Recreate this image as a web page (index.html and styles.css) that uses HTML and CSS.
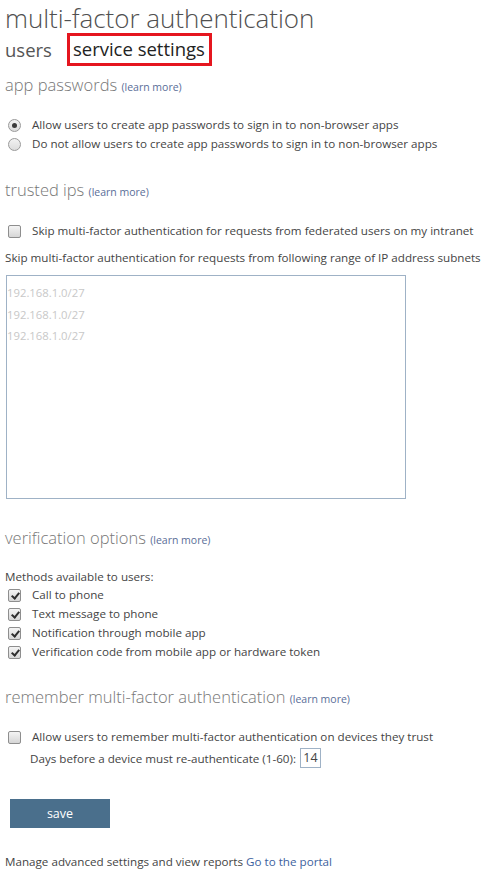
FILE: index.html
```html
<!DOCTYPE html>
<html>
<head>
<meta charset="utf-8">
<link rel="stylesheet" href="styles.css">
</head>
<body>
<div class="page">
  <h1 class="title">multi-factor authentication</h1>
  <div class="tabs">
    <span class="tab">users</span>
    <span class="tab active">service settings</span>
  </div>

  <h2 class="section">app passwords <a class="learn">(learn more)</a></h2>
  <div class="options">
    <div class="row"><span class="radio checked"></span><span>Allow users to create app passwords to sign in to non-browser apps</span></div>
    <div class="row"><span class="radio"></span><span>Do not allow users to create app passwords to sign in to non-browser apps</span></div>
  </div>

  <h2 class="section s-trusted">trusted ips <a class="learn">(learn more)</a></h2>
  <div class="row row-single"><span class="check"></span><span>Skip multi-factor authentication for requests from federated users on my intranet</span></div>
  <p class="plain">Skip multi-factor authentication for requests from following range of IP address subnets</p>
  <div class="ipbox">
    <div>192.168.1.0/27</div>
    <div>192.168.1.0/27</div>
    <div>192.168.1.0/27</div>
  </div>

  <h2 class="section s-verify">verification options <a class="learn">(learn more)</a></h2>
  <p class="plain methods">Methods available to users:</p>
  <div class="checks">
    <div class="crow"><span class="check on"></span><span>Call to phone</span></div>
    <div class="crow"><span class="check on"></span><span>Text message to phone</span></div>
    <div class="crow"><span class="check on"></span><span>Notification through mobile app</span></div>
    <div class="crow"><span class="check on"></span><span>Verification code from mobile app or hardware token</span></div>
  </div>

  <h2 class="section s-remember">remember multi-factor authentication <a class="learn">(learn more)</a></h2>
  <div class="row row-single"><span class="check"></span><span>Allow users to remember multi-factor authentication on devices they trust</span></div>
  <div class="days">Days before a device must re-authenticate (1-60): <span class="daysbox">14</span></div>

  <button class="save">save</button>

  <p class="footer">Manage advanced settings and view reports <a class="portal">Go to the portal</a></p>
</div>
</body>
</html>
```
FILE: styles.css
```css
* { box-sizing: border-box; }
html, body { margin: 0; padding: 0; background: #fff; }
body {
  font-family: "Open Sans", "Noto Sans", sans-serif;
  font-size: 11.65px;
  color: #444;
}
.page { padding: 0 0 0 5px; }
.title {
  margin: 0;
  font-size: 26px;
  font-weight: 300;
  color: #505050;
  line-height: 36px;
  letter-spacing: -0.05px;
}
.tabs {
  display: flex;
  align-items: center;
  gap: 15px;
  height: 33px;
  margin-top: -3px;
}
.tab { font-size: 18.5px; color: #555; line-height: 26px; }
.tab.active {
  color: #222;
  border: 3px solid #e5161f;
  padding: 0 4px 0 3px;
  height: 33px;
  line-height: 26px;
}
.section {
  margin: 8px 0 0 0;
  font-size: 16.5px;
  font-weight: 300;
  color: #777;
  line-height: 22px;
  white-space: nowrap;
}
.learn { font-size: 10.5px; color: #5a6e98; font-weight: 400; }
.options { margin-top: 20px; display: flex; flex-direction: column; gap: 5px; }
.row { display: flex; align-items: center; gap: 11px; padding-left: 3px; line-height: 14px; white-space: nowrap; }
.radio {
  width: 13px; height: 13px; border-radius: 50%;
  border: 1px solid #9a9a9a;
  background: linear-gradient(#f2f2f2, #dcdcdc);
  position: relative; flex: none;
}
.radio.checked::after {
  content: ""; position: absolute; left: 3px; top: 3px;
  width: 5px; height: 5px; border-radius: 50%; background: #3a3a3a;
}
.check {
  width: 13px; height: 13px; border: 1px solid #8e8e8e; border-radius: 2px;
  background: linear-gradient(#f4f4f4, #d6d6d6);
  position: relative; flex: none;
}
.check.on::after {
  content: "";
  position: absolute; left: 4px; top: 1px;
  width: 3px; height: 6px;
  border: solid #2e2e2e; border-width: 0 2px 2px 0;
  transform: rotate(40deg);
}
.s-trusted { margin-top: 28px; }
.row-single { margin-top: 20px; }
.plain { margin: 12px 0 0 0; line-height: 15px; white-space: nowrap; }
.s-trusted + .row-single { margin-top: 21px; }
.ipbox {
  margin-top: 10px;
  width: 400px; height: 224px;
  margin-left: 1px;
  border: 1px solid #9fb2c6;
  padding: 6px 0 0 0;
  color: #c8c8c8;
  font-size: 11.3px;
  line-height: 21.5px;
}
.s-verify { margin-top: 28px; }
.methods { margin-top: 18px; }
.checks { margin-top: 4px; display: flex; flex-direction: column; gap: 5px; padding-left: 3px; }
.crow { display: flex; align-items: center; gap: 11px; line-height: 14px; }
.s-remember { margin-top: 27px; }
.days { margin-top: 4px; padding-left: 25px; display: flex; align-items: center; gap: 4px; }
.daysbox {
  display: inline-block; border: 1px solid #9fb2c6;
  width: 21px; height: 20px; line-height: 18px; text-align: center; font-size: 12.5px;
}
.save {
  display: block;
  margin: 31px 0 0 5px;
  width: 100px; height: 29px;
  border: 0;
  background: #4a6f8c;
  color: #fff;
  font-family: inherit;
  font-size: 12.5px;
}
.footer { margin: 26px 0 0 0; line-height: 16px; }
.portal { color: #3d5f9e; }
```
